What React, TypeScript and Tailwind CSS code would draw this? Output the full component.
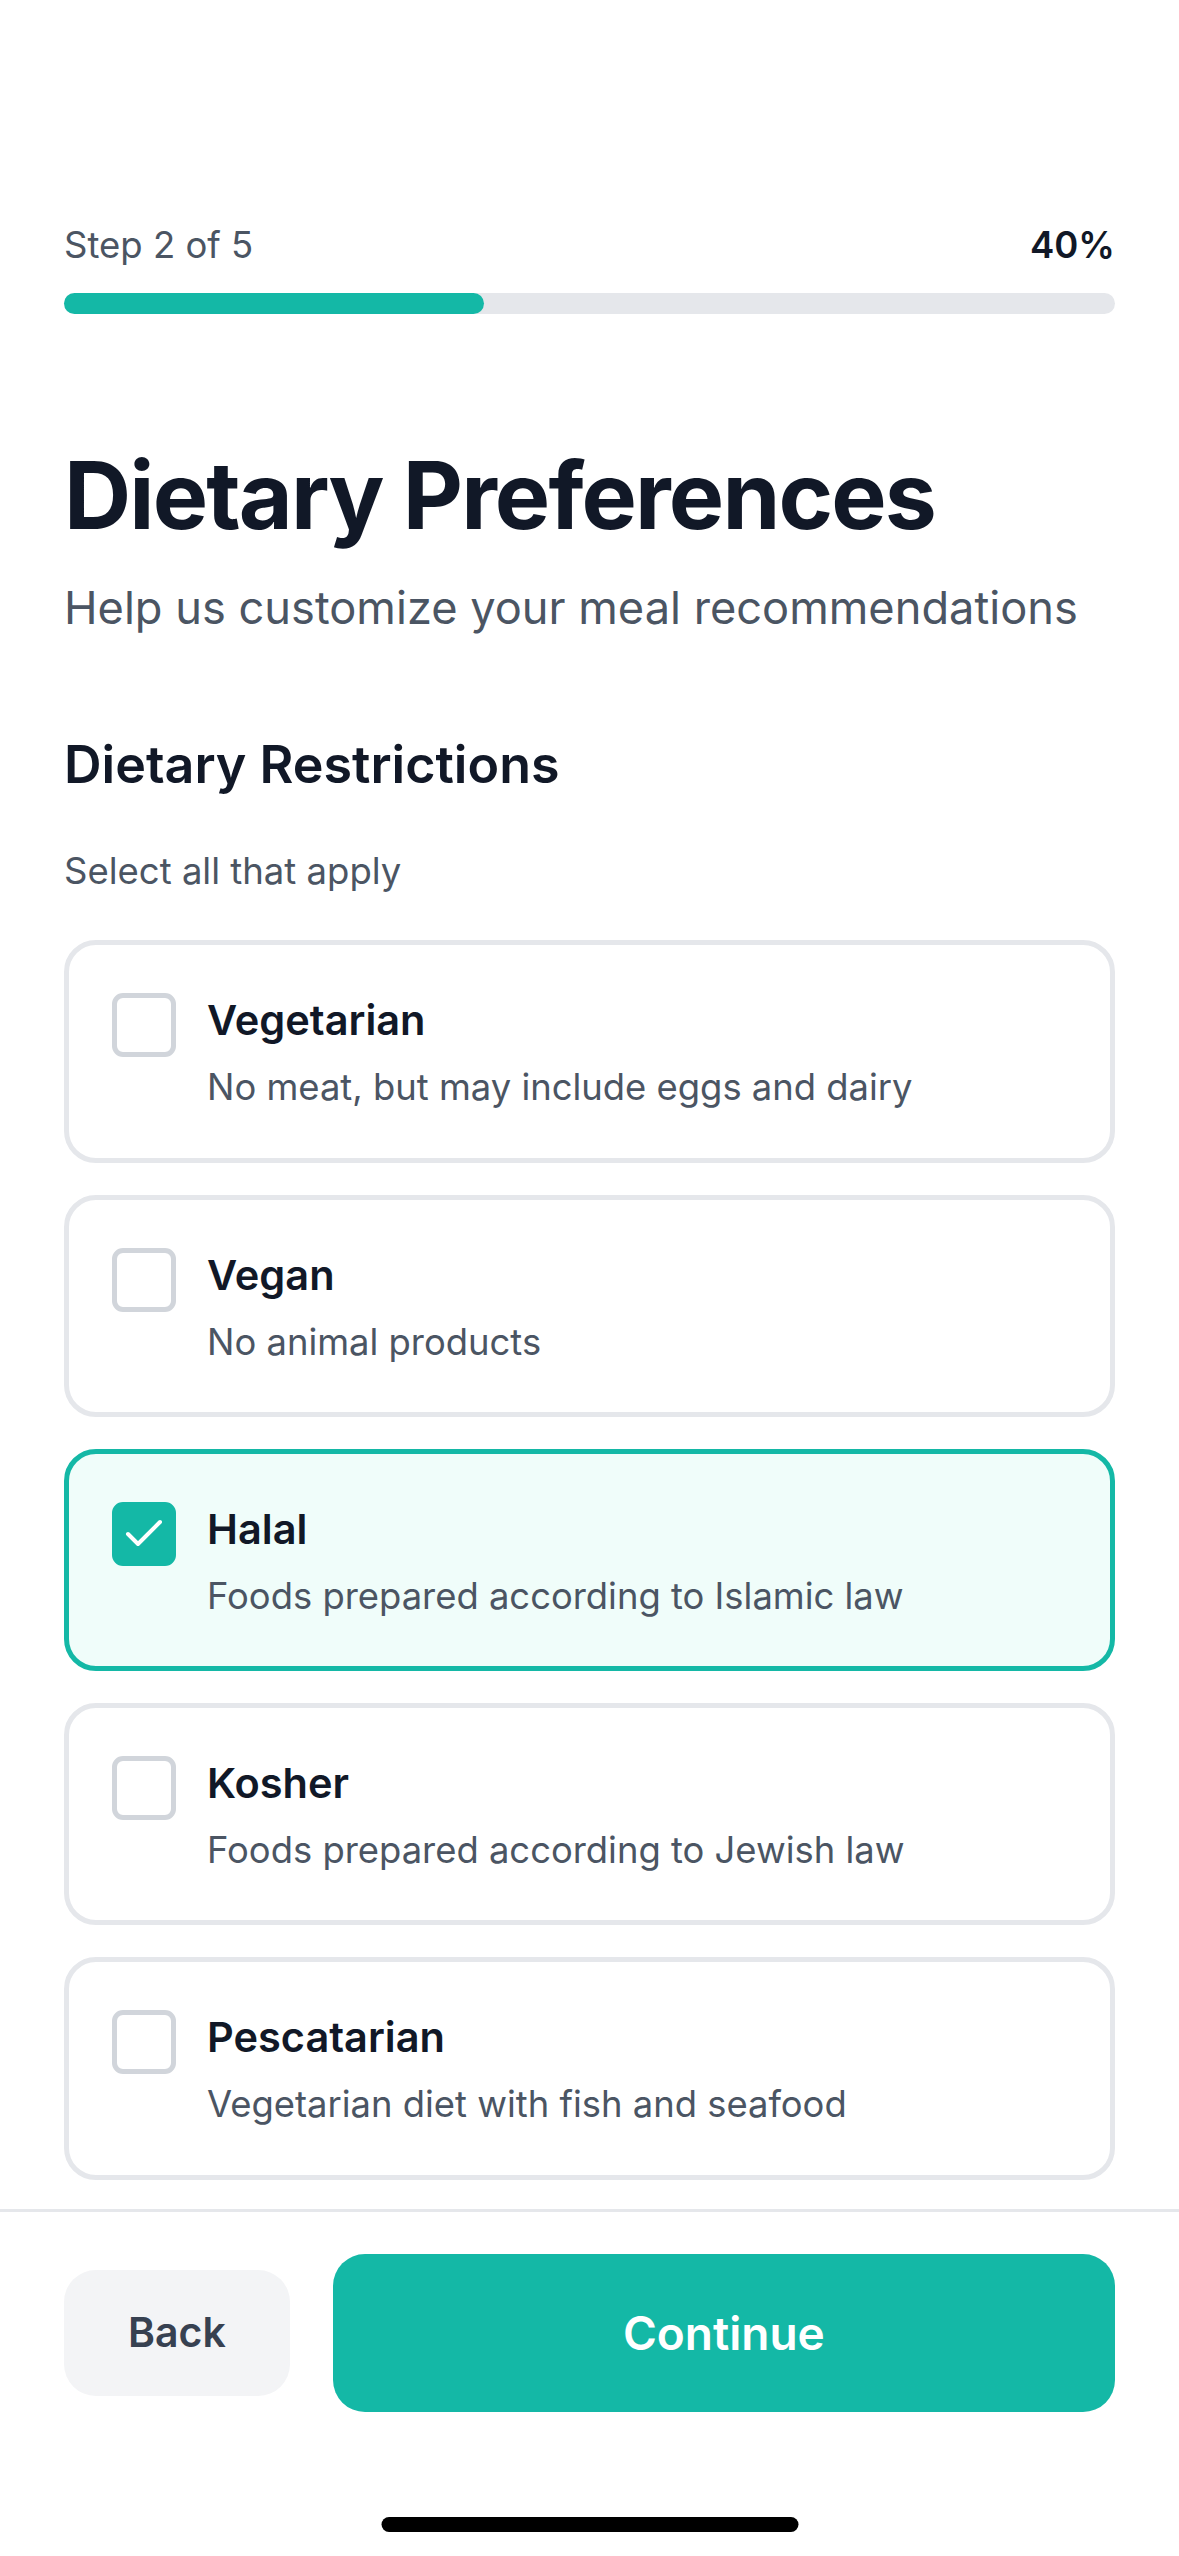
import React, { useState } from "react";
import { Check } from "lucide-react";

type Option = {
  id: string;
  title: string;
  description: string;
};

const options: Option[] = [
  { id: "vegetarian", title: "Vegetarian", description: "No meat, but may include eggs and dairy" },
  { id: "vegan", title: "Vegan", description: "No animal products" },
  { id: "halal", title: "Halal", description: "Foods prepared according to Islamic law" },
  { id: "kosher", title: "Kosher", description: "Foods prepared according to Jewish law" },
  { id: "pescatarian", title: "Pescatarian", description: "Vegetarian diet with fish and seafood" },
];

const STEP = 2;
const TOTAL = 5;

export default function App() {
  const [selected, setSelected] = useState<string[]>(["halal"]);

  const toggle = (id: string) =>
    setSelected((prev) => (prev.includes(id) ? prev.filter((x) => x !== id) : [...prev, id]));

  const percent = Math.round((STEP / TOTAL) * 100);

  return (
    <div className="relative flex h-[2556px] w-[1179px] flex-col overflow-hidden bg-white font-['Inter','Noto_Sans',sans-serif] antialiased">
      <main className="flex-1 overflow-hidden px-[64px] pt-[219px]">
        {/* Progress */}
        <div className="flex items-center justify-between text-[36.5px] leading-[53.3px]">
          <span className="text-[#4b5563]">
            Step {STEP} of {TOTAL}
          </span>
          <span className="font-semibold text-[#111827]">{percent}%</span>
        </div>
        <div className="mt-[21px] h-[21px] w-full rounded-full bg-[#e5e7eb]">
          <div className="h-full rounded-full bg-[#14b8a6]" style={{ width: `${percent}%` }} />
        </div>

        {/* Heading */}
        <h1 className="mt-[125px] text-[93px] leading-[112px] font-bold tracking-[-0.02em] text-[#111827]">
          Dietary Preferences
        </h1>
        <p className="mt-[22px] text-[45.2px] leading-[69px] text-[#4b5563]">
          Help us customize your meal recommendations
        </p>

        <h2 className="mt-[86px] text-[52px] leading-[74.7px] font-semibold text-[#111827]">
          Dietary Restrictions
        </h2>
        <p className="mt-[42px] text-[36.5px] leading-[53.3px] text-[#4b5563]">Select all that apply</p>

        {/* Options */}
        <div className="mt-[42px] flex flex-col gap-[32px]">
          {options.map((opt) => {
            const on = selected.includes(opt.id);
            return (
              <button
                key={opt.id}
                onClick={() => toggle(opt.id)}
                className={`flex w-full items-start gap-[31px] rounded-[32px] border-[5px] p-[43px] text-left ${
                  on ? "border-[#14b8a6] bg-[#f0fdfa]" : "border-[#e5e7eb] bg-white"
                }`}
              >
                <span
                  className={`mt-[5px] flex h-[64px] w-[64px] shrink-0 items-center justify-center rounded-[11px] border-[5px] ${
                    on ? "border-[#14b8a6] bg-[#14b8a6]" : "border-[#d1d5db] bg-white"
                  }`}
                >
                  {on && <Check size={48} strokeWidth={2} className="text-white" />}
                </span>
                <span className="flex flex-col">
                  <span className="text-[41.5px] leading-[64px] font-semibold text-[#111827]">{opt.title}</span>
                  <span className="mt-[9px] text-[36.4px] leading-[53.3px] text-[#4b5563]">
                    {opt.description}
                  </span>
                </span>
              </button>
            );
          })}
        </div>
      </main>

      {/* Footer actions */}
      <footer className="flex items-center gap-[43px] border-t-[3px] border-[#e5e7eb] bg-white px-[64px] pt-[42px] pb-[144px]">
        <button className="h-[126px] rounded-[32px] bg-[#f3f4f6] px-[64px] text-[41px] font-semibold text-[#374151]">
          Back
        </button>
        <button className="h-[158px] flex-1 rounded-[32px] bg-[#14b8a6] text-[46px] font-semibold text-white">
          Continue
        </button>
      </footer>

      {/* Home indicator */}
      <div className="absolute bottom-[24px] left-1/2 h-[15px] w-[417px] -translate-x-1/2 rounded-full bg-black" />
    </div>
  );
}
